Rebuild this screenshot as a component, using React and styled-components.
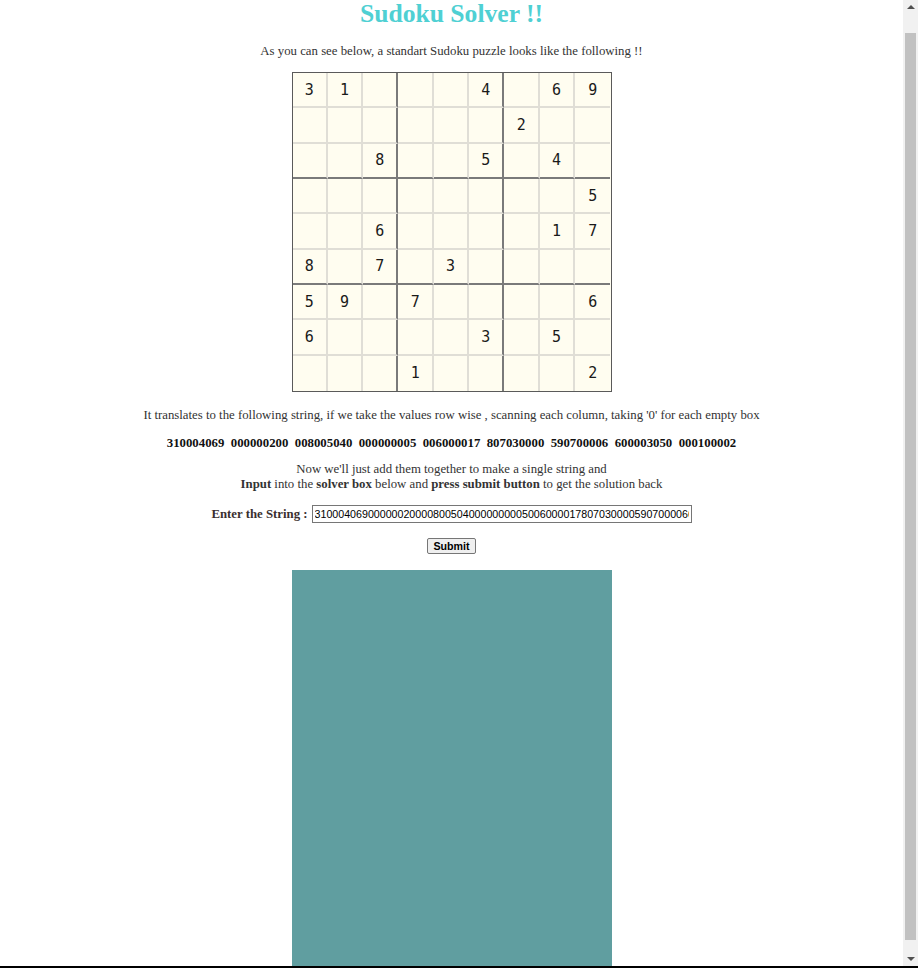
import React from "react";
import styled, { createGlobalStyle } from "styled-components";

const Global = createGlobalStyle`
  html, body { margin: 0; padding: 0; background: #ffffff; }
  body {
    font-family: "Liberation Serif", "Times New Roman", serif;
    color: #333333;
  }
`;

const Page = styled.main`
  display: flex;
  flex-direction: column;
  align-items: center;
  text-align: center;
  padding-right: 15px;
  font-size: 12.8px;
  line-height: 14px;
`;

const Title = styled.h1`
  margin: 0;
  font-size: 25.6px;
  line-height: 27px;
  font-weight: bold;
  color: #4fd0d3;
`;

const Text = styled.p`
  margin: ${(p) => p.$mt}px 0 0;
  line-height: ${(p) => p.$lh || 14}px;
  font-weight: ${(p) => (p.$bold ? "bold" : "normal")};
  color: ${(p) => (p.$bold ? "#111" : "#333")};
  white-space: pre;
`;

const Board = styled.div`
  margin-top: 14px;
  width: 320px;
  height: 320px;
  box-sizing: border-box;
  border: 1px solid #5a5a5a;
  background: #fffdf0;
  display: grid;
  grid-template-columns: repeat(9, 1fr);
  grid-template-rows: repeat(9, 1fr);
`;

const lineFor = (i) =>
  i === 8 ? "none" : i === 2 || i === 5 ? "2px solid #7a7a7a" : "2px solid #e0ded6";

const Cell = styled.div`
  display: flex;
  align-items: center;
  justify-content: center;
  border-right: ${(p) => lineFor(p.$col)};
  border-bottom: ${(p) => lineFor(p.$row)};
  font-family: "DejaVu Sans Mono", "Liberation Mono", monospace;
  font-size: 15px;
  color: #1a1a1a;
`;

const FormRow = styled.div`
  margin-top: 13px;
  display: flex;
  align-items: center;
  gap: 4px;
`;

const Label = styled.label`
  font-weight: bold;
  color: #3a2f2f;
`;

const Input = styled.input`
  width: 380px;
  height: 18px;
  box-sizing: border-box;
  border: 1px solid #767676;
  padding: 1px 2px;
  font-family: "Liberation Sans", Arial, sans-serif;
  font-size: 10.67px;
  color: #000;
  outline: none;
`;

const Button = styled.button`
  margin-top: 15px;
  height: 16px;
  box-sizing: border-box;
  padding: 0 5px;
  border: 1px solid #767676;
  border-radius: 2px;
  background: #efefef;
  font-family: "Liberation Sans", Arial, sans-serif;
  font-size: 10.67px;
  font-weight: bold;
  line-height: 12px;
  color: #000;
`;

const Result = styled.div`
  margin-top: 16px;
  width: 320px;
  height: 420px;
  background: #609ea0;
`;

/* drawing of the browser's scrollbar and window edge, shown over the page */
const ScrollTrack = styled.div`
  position: fixed;
  top: 0;
  right: 0;
  width: 15px;
  height: 966px;
  background: #f1f1f1;
  display: flex;
  flex-direction: column;
  align-items: center;
  justify-content: space-between;
`;

const Arrow = styled.div`
  width: 0;
  height: 0;
  margin: 5px 0;
  border-left: 4px solid transparent;
  border-right: 4px solid transparent;
  ${(p) =>
    p.$down ? "border-top: 4px solid #505050;" : "border-bottom: 4px solid #505050;"}
`;

const Thumb = styled.div`
  width: 11px;
  flex: 1;
  margin: 19px 0 12px;
  background: #c1c1c1;
`;

const WindowEdge = styled.div`
  position: fixed;
  left: 0;
  right: 0;
  bottom: 0;
  height: 2px;
  background: #000;
`;

const puzzle = [
  "310004069",
  "000000200",
  "008005040",
  "000000005",
  "006000017",
  "807030000",
  "590700006",
  "600003050",
  "000100002",
];

export default function App() {
  const full = puzzle.join("");
  return (
    <>
      <Global />
      <Page>
        <Title>Sudoku Solver !!</Title>
        <Text $mt={17}>
          As you can see below, a standart Sudoku puzzle looks like the following !!
        </Text>
        <Board>
          {puzzle.map((row, r) =>
            row.split("").map((d, c) => (
              <Cell key={`${r}-${c}`} $row={r} $col={c}>
                {d === "0" ? "" : d}
              </Cell>
            ))
          )}
        </Board>
        <Text $mt={16}>
          It translates to the following string, if we take the values row wise , scanning each column, taking '0' for each empty box
        </Text>
        <Text $mt={14} $bold>
          {puzzle.join("  ")}
        </Text>
        <Text $mt={12} $lh={15}>
          Now we'll just add them together to make a single string and
          {"\n"}
          <b>Input</b> into the <b>solver box</b> below and <b>press submit button</b> to get the solution back
        </Text>
        <FormRow>
          <Label htmlFor="str">Enter the String :</Label>
          <Input id="str" type="text" defaultValue={full} />
        </FormRow>
        <Button type="button">Submit</Button>
        <Result />
      </Page>
      <ScrollTrack>
        <Arrow />
        <Thumb />
        <Arrow $down />
      </ScrollTrack>
      <WindowEdge />
    </>
  );
}
